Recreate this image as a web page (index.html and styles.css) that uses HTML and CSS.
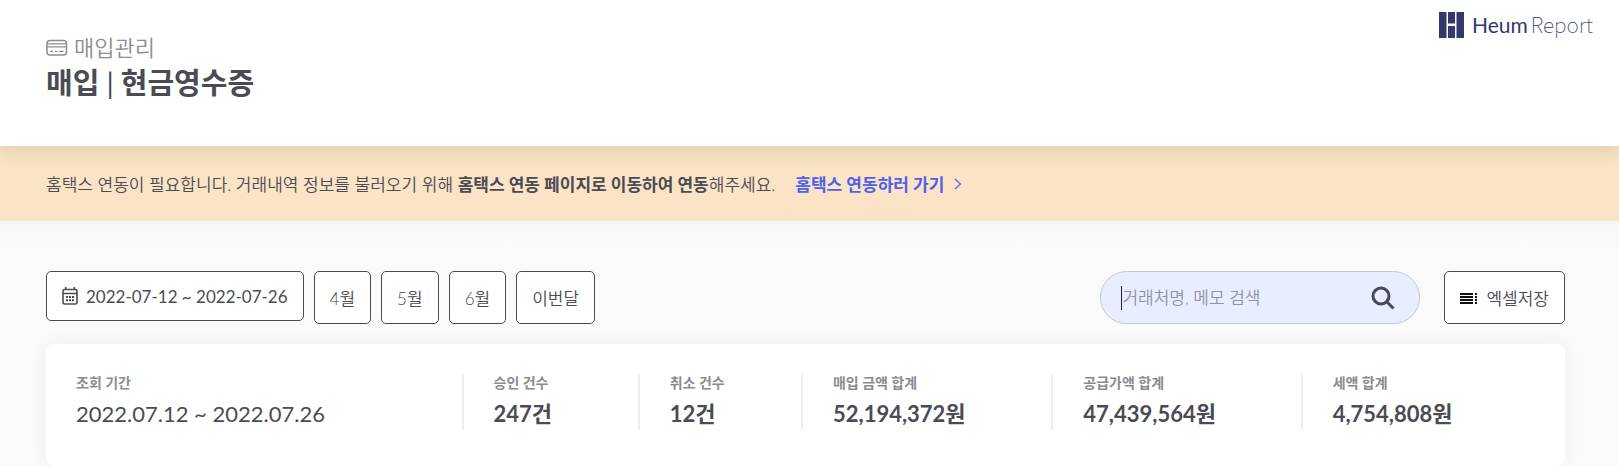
FILE: index.html
```html
<!DOCTYPE html>
<html lang="ko">
<head>
  <meta charset="UTF-8">
  <meta name="viewport" content="width=device-width, initial-scale=1.0">
  <title>매입 | 현금영수증 - Heum Report</title>
  <link rel="stylesheet" href="styles.css">
</head>
<body>
  <header class="page-header">
    <div class="page-title">
      <div class="category">
        <svg class="icon-card" width="22" height="18" viewBox="0 0 22 18" fill="none" stroke="currentColor">
          <rect x="1" y="1.5" width="19.5" height="14.5" rx="3" stroke-width="1.5"/>
          <path d="M1 4.9h19.5M1 7.9h19.5" stroke-width="1.4"/>
          <path d="M4 12.4h3M9 12.4h2.5M13 12.4h4.5" stroke-width="1.4"/>
        </svg>
        <span>매입관리</span>
      </div>
      <h1>매입 <span class="bar">|</span> 현금영수증</h1>
    </div>
    <a class="logo" href="#">
      <svg width="25" height="26" viewBox="0 0 25 26" fill="currentColor">
        <path d="M0 0h7.5v26H0zM17.5 0H25v26h-7.5zM9 0h7v11.5H9zM9 14h7v12H9z"/>
      </svg>
      <span class="logo-text"><b>Heum</b><span>Report</span></span>
    </a>
  </header>

  <div class="notice">
    <p>홈택스 연동이 필요합니다. 거래내역 정보를 불러오기 위해 <strong>홈택스 연동 페이지로 이동하여 연동</strong>해주세요.</p>
    <a href="#">홈택스 연동하러 가기
      <svg width="8" height="12" viewBox="0 0 8 12" fill="none" stroke="currentColor" stroke-width="1.2"><path d="M1 1l5.5 5L1 11"/></svg>
    </a>
  </div>

  <main>
    <div class="toolbar">
      <button class="btn btn-date" type="button">
        <svg width="16" height="18" viewBox="0 0 16 18" fill="none" stroke="currentColor">
          <rect x="1" y="2.5" width="14" height="14.5" rx="1.5" stroke-width="1.6"/>
          <path d="M1 6.5h14M3.7 0v3M12.3 0v3" stroke-width="1.6"/>
          <path d="M4 10h2M7 10h2M10 10h2M4 13.3h2M7 13.3h2M10 13.3h2" stroke-width="2"/>
        </svg>
        <span>2022-07-12 ~ 2022-07-26</span>
      </button>
      <button class="btn" type="button">4월</button>
      <button class="btn" type="button">5월</button>
      <button class="btn" type="button">6월</button>
      <button class="btn" type="button">이번달</button>

      <form class="search">
        <input type="text" placeholder="거래처명, 메모 검색" aria-label="거래처명, 메모 검색">
        <button type="submit" aria-label="검색">
          <svg width="24" height="24" viewBox="0 0 24 24" fill="none" stroke="currentColor" stroke-width="3">
            <circle cx="10" cy="10" r="8"/>
            <path d="M15.5 15.5l7 7"/>
          </svg>
        </button>
      </form>
      <button class="btn btn-excel" type="button">
        <svg width="18" height="12" viewBox="0 0 18 12" fill="#111">
          <path d="M0 1h13v2H0zM0 4h13v2H0zM0 7h13v2H0zM0 10h13v2H0zM15 1h2v2h-2zM15 4h2v2h-2zM15 7h2v2h-2zM15 10h2v2h-2z"/>
        </svg>
        <span>엑셀저장</span>
      </button>
    </div>

    <dl class="summary">
      <div class="summary-item period"><dt>조회 기간</dt><dd>2022.07.12 ~ 2022.07.26</dd></div>
      <div class="summary-item"><dt>승인 건수</dt><dd>247건</dd></div>
      <div class="summary-item"><dt>취소 건수</dt><dd>12건</dd></div>
      <div class="summary-item"><dt>매입 금액 합계</dt><dd>52,194,372원</dd></div>
      <div class="summary-item"><dt>공급가액 합계</dt><dd>47,439,564원</dd></div>
      <div class="summary-item"><dt>세액 합계</dt><dd>4,754,808원</dd></div>
    </dl>
  </main>
</body>
</html>
```
FILE: styles.css
```css
* {
  box-sizing: border-box;
}

body {
  margin: 0;
  background: #fafafa;
  color: #4b4b53;
  font-family: Lato, "Noto Sans CJK KR", sans-serif;
  font-size: 17px;
  overflow: hidden;
}

a {
  color: inherit;
  text-decoration: none;
}

button,
input {
  font: inherit;
  color: inherit;
}

/* header */
.page-header {
  position: relative;
  z-index: 1;
  display: flex;
  justify-content: space-between;
  align-items: flex-start;
  padding: 12px 26px 44px 46px;
  background: #fff;
  box-shadow: 0 0 20px 4px rgba(60, 60, 60, 0.14);
}

.page-title {
  padding-top: 20px;
}

.category {
  display: flex;
  align-items: center;
  gap: 6px;
  font-size: 22px;
  line-height: 32px;
  color: #8b8e93;
}

.category span {
  font-weight: 350;
}

h1 {
  margin: 0;
  font-size: 29px;
  line-height: 38px;
  font-weight: 700;
}

h1 .bar {
  font-weight: 400;
}

.logo {
  display: flex;
  align-items: center;
  gap: 8px;
  color: #34386a;
}

.logo-text {
  display: flex;
  align-items: baseline;
  gap: 3px;
  font-size: 21px;
  line-height: 24px;
}

.logo-text b {
  font-weight: 400;
}

.logo-text span {
  font-family: "Noto Sans CJK KR", sans-serif;
  font-weight: 100;
  line-height: 20px;
}

/* notice */
.notice {
  display: flex;
  align-items: center;
  gap: 20px;
  height: 75px;
  padding: 0 46px;
  background: #fae4c5;
  font-weight: 350;
}

.notice p {
  margin: 0;
}

.notice strong {
  font-weight: 700;
}

.notice a {
  display: flex;
  align-items: center;
  gap: 10px;
  color: #4f5fee;
  font-weight: 700;
}

main {
  padding: 50px 54px 0 46px;
  background: linear-gradient(#f6f6f6, #fafafa 24px);
}

/* toolbar */
.toolbar {
  display: flex;
  align-items: flex-start;
  gap: 10px;
  margin-bottom: 20px;
}

.btn {
  height: 53px;
  padding: 0 15px;
  border: 1px solid #4b4b53;
  border-radius: 5px;
  background: #fff;
  font-weight: 350;
}

.btn-date,
.btn-excel {
  display: flex;
  align-items: center;
  gap: 8px;
}

.btn-date {
  height: 50px;
  font-weight: 400;
}

.search {
  display: flex;
  align-items: center;
  width: 320px;
  height: 53px;
  margin-left: auto;
  margin-right: 14px;
  padding: 0 24px 0 20px;
  border: 1px solid #c4c7d4;
  border-radius: 27px;
  background: #e8edff;
}

/* text cursor */
.search::before {
  content: "";
  width: 1px;
  height: 24px;
  background: #222;
}

.search input {
  flex: 1;
  min-width: 0;
  padding: 0;
  border: 0;
  outline: none;
  background: none;
  font-weight: 350;
}

.search input::placeholder {
  color: #9093a4;
}

.search button {
  display: flex;
  padding: 0;
  border: 0;
  background: none;
}

/* summary */
.summary {
  display: grid;
  grid-template-columns: 385fr 176fr 163fr 250fr 249fr 234fr;
  margin: 0;
  padding: 30px 30px 36px;
  border-radius: 8px;
  background: #fff;
  box-shadow: 0 0 20px rgba(0, 0, 0, 0.05);
}

.summary-item {
  height: 56px;
  padding-left: 30px;
  border-left: 2px solid #eee;
}

.summary-item.period {
  padding-left: 0;
  border-left: 0;
}

.summary dt {
  font-size: 14px;
  line-height: 18px;
  font-weight: 700;
  color: #8b8b90;
}

.summary dd {
  margin: 6px 0 0;
  font-size: 22px;
  line-height: 32px;
  font-weight: 700;
}

.summary .period dd {
  font-weight: 400;
}
```
